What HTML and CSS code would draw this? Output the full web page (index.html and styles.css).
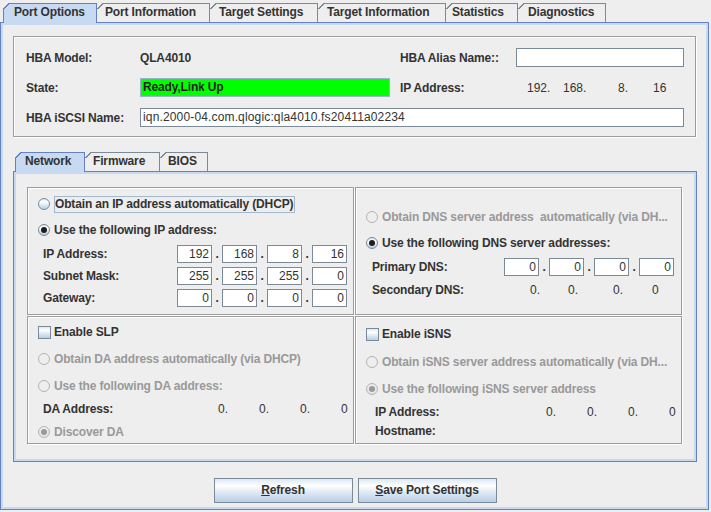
FILE: index.html
```html
<!DOCTYPE html>
<html lang="en">
<head>
<meta charset="utf-8">
<title>Port Options</title>
<link rel="stylesheet" href="styles.css">
</head>
<body>
<div class="win">
  <div class="tabs top">
    <div class="tab sel t-po">Port Options</div>
    <div class="tab t-pi">Port Information</div>
    <div class="tab t-ts">Target Settings</div>
    <div class="tab t-ti">Target Information</div>
    <div class="tab t-st">Statistics</div>
    <div class="tab t-dg">Diagnostics</div>
  </div>
  <div class="content outer">
    <div class="etched hba">
      <div class="lbl">HBA Model:</div>
      <div class="lbl">QLA4010</div>
      <div class="lbl">HBA Alias Name::</div>
      <div class="field"></div>
      <div class="lbl">State:</div>
      <div class="field green">Ready,Link Up</div>
      <div class="lbl">IP Address:</div>
      <div class="cells hbaip"><span>192.</span><span>168.</span><span>8.</span><span>16</span></div>
      <div class="lbl">HBA iSCSI Name:</div>
      <div class="field wide">iqn.2000-04.com.qlogic:qla4010.fs20411a02234</div>
    </div>

    <div class="subpane">
      <div class="tabs sub">
        <div class="tab sel t-nw">Network</div>
        <div class="tab t-fw">Firmware</div>
        <div class="tab t-bi">BIOS</div>
      </div>
      <div class="content inner">
        <div class="quads">
          <div class="etched q q1">
            <div class="row"><span class="radio"></span><span class="rlabel focus">Obtain an IP address automatically (DHCP)</span></div>
            <div class="row mt6"><span class="radio on"></span><span class="rlabel">Use the following IP address:</span></div>
            <div class="row fld mt5"><span class="flabel lab-ip">IP Address:</span><span class="box">192</span><span class="dot">.</span><span class="box">168</span><span class="dot">.</span><span class="box">8</span><span class="dot">.</span><span class="box">16</span></div>
            <div class="row fld mt4"><span class="flabel lab-ip">Subnet Mask:</span><span class="box">255</span><span class="dot">.</span><span class="box">255</span><span class="dot">.</span><span class="box">255</span><span class="dot">.</span><span class="box">0</span></div>
            <div class="row fld mt4"><span class="flabel lab-ip">Gateway:</span><span class="box">0</span><span class="dot">.</span><span class="box">0</span><span class="dot">.</span><span class="box">0</span><span class="dot">.</span><span class="box">0</span></div>
          </div>

          <div class="etched q q2">
            <div class="row"><span class="radio dis"></span><span class="rlabel disabled">Obtain DNS server address  automatically (via DH...</span></div>
            <div class="row mt6"><span class="radio on"></span><span class="rlabel">Use the following DNS server addresses:</span></div>
            <div class="row fld mt5"><span class="flabel lab-dns">Primary DNS:</span><span class="box">0</span><span class="dot">.</span><span class="box">0</span><span class="dot">.</span><span class="box">0</span><span class="dot">.</span><span class="box">0</span></div>
            <div class="row fld mt5"><span class="flabel lab-dns2">Secondary DNS:</span><span class="cells dns2"><span>0.</span><span>0.</span><span>0.</span><span>0</span></span></div>
          </div>

          <div class="etched q q3">
            <div class="row"><span class="check"></span><span class="clabel">Enable SLP</span></div>
            <div class="row mt7"><span class="radio dis"></span><span class="rlabel disabled">Obtain DA address automatically (via DHCP)</span></div>
            <div class="row mt7"><span class="radio dis"></span><span class="rlabel disabled">Use the following DA address:</span></div>
            <div class="row fld mt4"><span class="flabel lab-da">DA Address:</span><span class="cells c41"><span>0.</span><span>0.</span><span>0.</span><span>0</span></span></div>
            <div class="row mt4"><span class="radio dis on"></span><span class="rlabel disabled">Discover DA</span></div>
          </div>

          <div class="etched q q4">
            <div class="row"><span class="check"></span><span class="clabel">Enable iSNS</span></div>
            <div class="row mt8"><span class="radio dis"></span><span class="rlabel disabled">Obtain iSNS server address automatically (via DH...</span></div>
            <div class="row mt7"><span class="radio dis on"></span><span class="rlabel disabled">Use the following iSNS server address</span></div>
            <div class="row fld mt4"><span class="flabel lab-isns">IP Address:</span><span class="cells c41"><span>0.</span><span>0.</span><span>0.</span><span>0</span></span></div>
            <div class="row fld mt1"><span class="flabel lab-isns">Hostname:</span></div>
          </div>
        </div>
      </div>
    </div>

    <div class="buttons">
      <div class="btn"><u>R</u>efresh</div>
      <div class="btn"><u>S</u>ave Port Settings</div>
    </div>
  </div>
</div>
</body>
</html>
```

FILE: styles.css
```css
* { box-sizing: border-box; }
html, body { margin: 0; padding: 0; }
body {
  width: 711px;
  height: 512px;
  overflow: hidden;
  background: #eeeeee;
  color: #333333;
  font: bold 12px "Liberation Sans", Arial, sans-serif;
  letter-spacing: -0.15px;
}

.win { width: 709px; padding-top: 3px; }

/* ---------- tabs ---------- */
.tabs { display: flex; align-items: flex-start; height: 19px; }
.tabs.top { padding-left: 3px; }
.tabs.sub { padding-left: 2px; }

.tab {
  position: relative;
  flex: none;
  height: 19px;
  padding: 0 0 0 9px;
  border: 1px solid #7a8a99;
  border-bottom: 0;
  margin-right: -1px;
  line-height: 17px;
  white-space: nowrap;
  background: #eeeeee;
}
.tab.sel {
  height: 20px;
  background: #c8daf2;
  border-color: #6382bf;
  z-index: 1;
}
.tab::before {
  content: "";
  position: absolute;
  top: -1px;
  left: 0;
  width: 6px;
  height: 6px;
  background: linear-gradient(135deg, #eeeeee 0 42%, #7a8a99 42% 60%, transparent 60%);
}
.tab:first-child::before { left: -1px; }
.tab.sel::before {
  background: linear-gradient(135deg, #eeeeee 0 42%, #6382bf 42% 60%, transparent 60%);
}
.t-po { width: 94px; padding-left: 10px; }
.t-pi { width: 114px; padding-left: 8px; }
.t-ts { width: 109px; }
.t-ti { width: 129px; }
.t-st { width: 73px; padding-left: 6px; }
.t-dg { width: 89px; padding-left: 10px; }
.t-nw { width: 70px; }
.t-fw { width: 76px; padding-left: 8px; }
.t-bi { width: 49px; padding-left: 8px; }

.content {
  border: 1px solid #6382bf;
  box-shadow: inset 0 0 0 2px #c8daf2;
}
.outer { height: 488px; padding: 13px 11px 0 12px; }
.inner { height: 291px; padding: 15px 13px 0 13px; }

/* ---------- etched panels ---------- */
.etched {
  border: 1px solid #9c9c9c;
  box-shadow: inset 1px 1px 0 #ffffff, 1px 1px 0 #ffffff;
}

.hba {
  display: grid;
  grid-template-columns: 114px 260px 116px 168px;
  grid-template-rows: repeat(3, 19px);
  row-gap: 11px;
  align-items: center;
  width: 683px;
  height: 101px;
  padding: 11px 0 0 12px;
}
.lbl { white-space: nowrap; }

.field {
  height: 19px;
  background: #ffffff;
  border: 1px solid #7a8a99;
  font-weight: normal;
  letter-spacing: 0.15px;
  line-height: 17px;
  padding-left: 2px;
  white-space: nowrap;
  overflow: hidden;
}
.field.green {
  width: 250px;
  background: #00ff00;
  border-color: #9fb4cc;
  font-weight: bold;
  letter-spacing: -0.15px;
  color: #1e1e1e;
}
.field.wide { grid-column: 2 / 5; }

.cells { display: flex; font-weight: normal; letter-spacing: 0; white-space: pre; }
.cells > span { flex: none; }
.hbaip { padding-left: 11px; }
.hbaip > span:nth-child(1) { width: 36px; }
.hbaip > span:nth-child(2) { width: 55px; }
.hbaip > span:nth-child(3) { width: 35px; }
.dns2 > span:nth-child(1) { width: 38px; }
.dns2 > span:nth-child(2) { width: 45px; }
.dns2 > span:nth-child(3) { width: 39px; }
.c41 > span { width: 41px; }

.subpane { margin-top: 15px; }

.quads {
  display: grid;
  grid-template-columns: 328px 328px;
  grid-template-rows: 129px 129px;
}
.q { margin: 0 1px 1px 0; padding-left: 10px; }
.q1 { padding-top: 6px; }
.q2 { padding-top: 19px; }
.q3 { padding-top: 5px; }
.q4 { padding-top: 7px; }

.row { display: flex; align-items: center; height: 20px; white-space: nowrap; }
.row.fld { height: 18px; }
.mt1 { margin-top: 1px; }
.mt4 { margin-top: 4px; }
.mt5 { margin-top: 5px; }
.mt6 { margin-top: 6px; }
.mt7 { margin-top: 7px; }
.mt8 { margin-top: 8px; }

.radio {
  position: relative;
  flex: none;
  width: 12px;
  height: 12px;
  border-radius: 50%;
  border: 1px solid #7a8a99;
  background: linear-gradient(#dde8f3 0%, #ffffff 30%, #dde8f3 60%, #b8cfe5 100%);
}
.radio.on::after {
  content: "";
  position: absolute;
  left: 2px;
  top: 2px;
  width: 6px;
  height: 6px;
  border-radius: 50%;
  background: #1e1e1e;
}
.radio.dis { border-color: #b4b4b4; background: #eeeeee; }
.radio.dis.on { background: linear-gradient(#eeeeee, #e2e6ea); }
.radio.dis.on::after { background: #9a9a9a; }

.check {
  flex: none;
  width: 13px;
  height: 13px;
  border: 1px solid #7a8a99;
  background: linear-gradient(#dde8f3 0%, #ffffff 30%, #dde8f3 60%, #b8cfe5 100%);
}

.rlabel { margin-left: 4px; white-space: pre; }
.clabel { margin-left: 3px; }
.rlabel.focus { border: 1px solid #a3b8cc; line-height: 15px; padding-right: 1px; }
.disabled { color: #999999; }

.flabel { flex: none; }
.lab-ip { margin-left: 5px; width: 134px; }
.lab-dns { margin-left: 6px; width: 132px; }
.lab-dns2 { margin-left: 6px; width: 158px; }
.lab-da { margin-left: 5px; width: 175px; }
.lab-isns { margin-left: 9px; width: 171px; }

.box {
  flex: none;
  width: 35px;
  height: 18px;
  background: #ffffff;
  border: 1px solid #7a8a99;
  font-weight: normal;
  letter-spacing: 0;
  text-align: right;
  padding-right: 2px;
  line-height: 16px;
}
.dot { flex: none; width: 10px; text-align: center; line-height: 18px; }

/* ---------- buttons ---------- */
.buttons { display: flex; justify-content: center; gap: 5px; margin-top: 16px; }
.btn {
  width: 139px;
  height: 25px;
  border: 1px solid #7a8a99;
  background: linear-gradient(#dde8f3 0%, #ffffff 30%, #dde8f3 60%, #b8cfe5 100%);
  text-align: center;
  line-height: 23px;
}
.btn u { text-decoration: underline; }
```
